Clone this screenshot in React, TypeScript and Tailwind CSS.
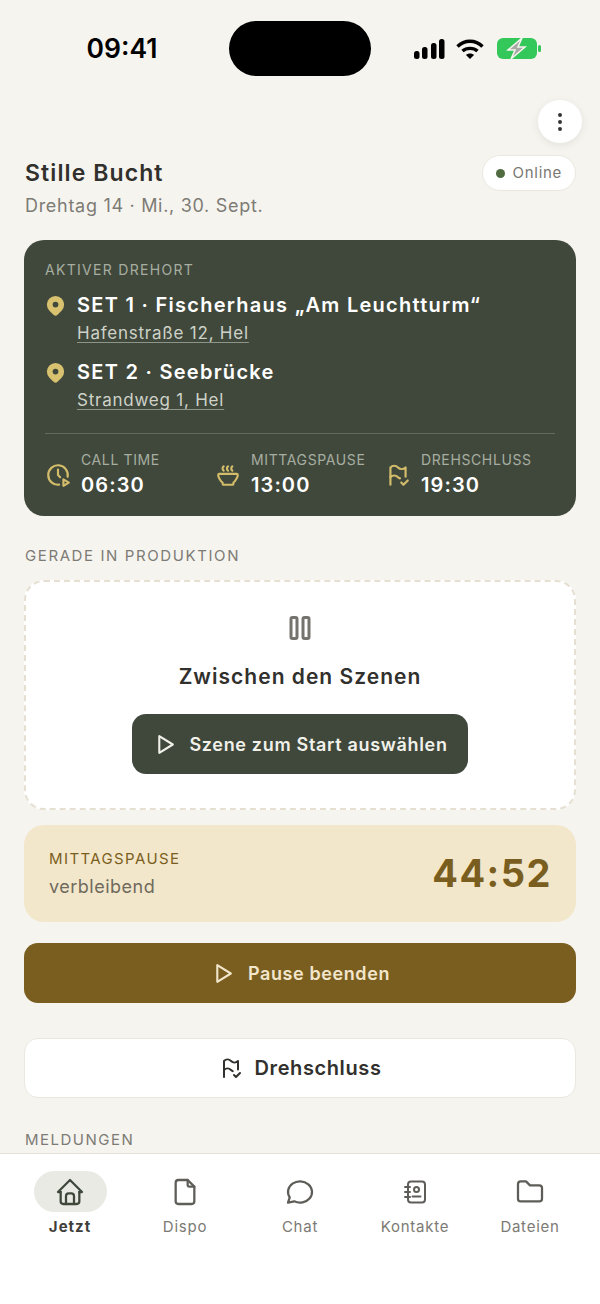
import { TbClockPlay, TbFlagCheck, TbSoup, TbMapPinFilled, TbPlayerPlay, TbPlayerPause, TbHome, TbFile, TbMessageCircle, TbFolder, TbDotsVertical } from "react-icons/tb";

const ContactsIcon = () => (
  <svg width="26" height="26" viewBox="0 0 26 26" fill="none" stroke="currentColor" strokeWidth="2" strokeLinecap="round" strokeLinejoin="round">
    <rect x="6" y="2.5" width="17" height="21" rx="3" />
    <path d="M3 8h5M3 13h5M3 18h5" />
    <circle cx="14.5" cy="10.5" r="2.5" />
    <path d="M10.5 17.5h8" />
  </svg>
);

const Timing = ({ icon, label, time }: { icon: any; label: string; time: string }) => (
  <div className="flex w-[170px] items-center gap-[10px]">
    <div className="text-[#d4bd6a] text-[26px]">{icon}</div>
    <div className="flex flex-col gap-[2px]">
      <span className="text-[14px] leading-[18px] tracking-[0.62px] text-[#a7aea1]">{label}</span>
      <span className="text-[20px] leading-[28px] font-semibold tracking-[1.1px] text-white">{time}</span>
    </div>
  </div>
);

const SetRow = ({ title, address }: { title: string; address: string }) => (
  <div className="flex gap-[10px]">
    <TbMapPinFilled className="text-[#d9c26f] text-[23px] -ml-[1px] mt-[3px] shrink-0" />
    <div className="flex flex-col">
      <span className="text-[20px] leading-[28px] font-semibold tracking-[1.27px] text-white">{title}</span>
      <span className="text-[17px] leading-[28px] tracking-[0.77px] text-[#ced2c8] underline decoration-1 underline-offset-[3px] decoration-[#8d9588]">{address}</span>
    </div>
  </div>
);

const NavItem = ({ icon, label, active }: { icon: any; label: string; active?: boolean }) => (
  <div className="flex flex-col items-center w-[115px]">
    <div className={`w-[73px] h-[41px] rounded-full flex items-center justify-center text-[32px] ${active ? "bg-[#e8eae3] text-[#40483c]" : "text-[#5e5d58]"}`}>
      {icon}
    </div>
    <span className={`mt-[4px] text-[15px] leading-[22px] ${active ? "font-bold tracking-[1px] text-[#3e3e3a]" : "tracking-[0.75px] text-[#7c7a74]"}`}>{label}</span>
  </div>
);

export default function App() {
  return (
    <div className="relative h-[1304px] w-[600px] overflow-hidden bg-[#f6f4ef] font-['Inter',sans-serif]">
      {/* status bar */}
      <div className="flex h-[96px] items-start">
        <div className="w-[229px] pt-[31px] pl-[15px] text-center text-[26.5px] leading-[34px] font-semibold text-black">09:41</div>
        <div className="mt-[21px] h-[55px] w-[142px] rounded-full bg-black" />
        <div className="flex items-center gap-[13px] pl-[43px] pt-[38px]">
          <svg width="31" height="22" viewBox="0 0 31 22" fill="black">
            <rect x="0" y="13" width="5.5" height="8" rx="2.5" />
            <rect x="8" y="9" width="5.5" height="12" rx="2.5" />
            <rect x="17" y="5" width="5.5" height="16" rx="2.5" />
            <rect x="25" y="1" width="5.5" height="20" rx="2.5" />
          </svg>
          <svg width="28" height="22" viewBox="0 0 28 22" fill="none" stroke="black" strokeWidth="3.4" strokeLinecap="butt" className="-ml-[2px]">
            <path d="M1.5 8.5C8.5 1.5 19.5 1.5 26.5 8.5" />
            <path d="M6.5 13C10.5 9.5 17.5 9.5 21.5 13" />
            <path d="M14 21l-4-4c2-2 6-2 8 0z" fill="black" stroke="none" />
          </svg>
          <svg width="44" height="22" viewBox="0 0 44 22">
            <rect x="0" y="0" width="40" height="21" rx="6" fill="#34c759" />
            <rect x="41" y="7" width="3" height="7" rx="1.5" fill="#34c759" />
            <path d="M25 0L11 12h7l-4 9 14-12h-7z" fill="#a9a9a5" stroke="#f6f4ef" strokeWidth="1.5" />
          </svg>
        </div>
      </div>

      {/* overflow menu floats above the page */}
      <div className="absolute left-[538px] top-[100px] flex h-[43px] w-[44px] items-center justify-center rounded-full bg-white text-[24px] text-[#333] shadow-[0_2px_8px_rgba(0,0,0,0.08)]">
        <TbDotsVertical />
      </div>

      <div className="px-[24px]">
        {/* header */}
        <div className="mt-[59px] flex items-start justify-between pl-[1px]">
          <div className="pt-[2px]">
            <h1 className="text-[23px] leading-[32px] font-semibold tracking-[1.1px] text-[#31302c]">Stille Bucht</h1>
            <p className="mt-[5px] text-[18px] leading-[24px] tracking-[0.7px] text-[#7d7b75]">Drehtag 14 · Mi., 30. Sept.</p>
          </div>
          <div className="flex h-[36px] items-center gap-[8px] rounded-full border border-[#ebe8e0] bg-white pl-[13px] pr-[13px]">
            <span className="h-[9px] w-[9px] rounded-full bg-[#4f6b3f]" />
            <span className="text-[15px] tracking-[0.7px] text-[#7a7872]">Online</span>
          </div>
        </div>

        {/* location card */}
        <div className="mt-[22px] h-[276px] rounded-[20px] bg-[#40483c] px-[21px] pt-[21px]">
          <div className="text-[14px] leading-[18px] tracking-[1.3px] text-[#a7aea1]">AKTIVER DREHORT</div>
          <div className="mt-[12px] flex flex-col gap-[11px]">
            <SetRow title="SET 1 · Fischerhaus „Am Leuchtturm“" address="Hafenstraße 12, Hel" />
            <SetRow title="SET 2 · Seebrücke" address="Strandweg 1, Hel" />
          </div>
          <div className="mt-[19px] flex border-t border-[#636b5f] pt-[17px]">
            <Timing icon={<TbClockPlay />} label="CALL TIME" time="06:30" />
            <Timing icon={<TbSoup />} label="MITTAGSPAUSE" time="13:00" />
            <Timing icon={<TbFlagCheck />} label="DREHSCHLUSS" time="19:30" />
          </div>
        </div>

        {/* production */}
        <div className="mt-[30px] pl-[1px] text-[15px] leading-[20px] tracking-[1.6px] text-[#7d7b75]">GERADE IN PRODUKTION</div>
        <div className="mt-[14px] flex h-[230px] flex-col items-center rounded-[20px] border-2 border-dashed border-[#e6e0d2] bg-white pt-[28px]">
          <TbPlayerPause className="text-[36px] text-[#75736d]" />
          <div className="mt-[17px] text-[21px] leading-[28px] font-semibold tracking-[1.02px] text-[#31302c]">Zwischen den Szenen</div>
          <div className="mt-[23px] flex h-[60px] w-[336px] items-center justify-center gap-[12px] rounded-[14px] bg-[#40483c] text-[#f1f1ea]">
            <TbPlayerPlay className="text-[25px]" />
            <span className="text-[18px] font-semibold tracking-[0.68px]">Szene zum Start auswählen</span>
          </div>
        </div>

        {/* lunch countdown */}
        <div className="mt-[15px] flex h-[97px] items-center justify-between rounded-[20px] bg-[#f2e6cb] pl-[25px] pr-[24px]">
          <div className="flex flex-col">
            <span className="text-[15px] leading-[20px] tracking-[1.4px] text-[#7a5e20]">MITTAGSPAUSE</span>
            <span className="mt-[6px] text-[18px] leading-[24px] tracking-[0.5px] text-[#6f6a5c]">verbleibend</span>
          </div>
          <span className="text-[38px] font-bold tracking-[1.5px] text-[#7a5e20]">44:52</span>
        </div>

        <div className="mt-[21px] flex h-[60px] items-center justify-center gap-[13px] rounded-[14px] bg-[#7a5e20] text-[#f2e6cb]">
          <TbPlayerPlay className="text-[25px]" />
          <span className="text-[18px] font-semibold tracking-[0.6px]">Pause beenden</span>
        </div>

        <div className="mt-[35px] flex h-[60px] items-center justify-center gap-[12px] rounded-[14px] border border-[#ebe8e0] bg-white text-[#31302c]">
          <TbFlagCheck className="text-[24px]" />
          <span className="text-[20px] font-semibold tracking-[0.6px]">Drehschluss</span>
        </div>

        <div className="mt-[32px] pl-[1px] text-[15px] leading-[20px] tracking-[1.5px] text-[#7d7b75]">MELDUNGEN</div>
      </div>

      {/* bottom tab bar */}
      <div className="absolute inset-x-0 bottom-0 flex h-[151px] justify-center border-t border-[#e6e2d9] bg-white pt-[17px]">
        <NavItem icon={<TbHome strokeWidth={1.7} />} label="Jetzt" active />
        <NavItem icon={<TbFile strokeWidth={1.7} />} label="Dispo" />
        <NavItem icon={<TbMessageCircle strokeWidth={1.7} />} label="Chat" />
        <NavItem icon={<ContactsIcon />} label="Kontakte" />
        <NavItem icon={<TbFolder strokeWidth={1.7} />} label="Dateien" />
      </div>
    </div>
  );
}
